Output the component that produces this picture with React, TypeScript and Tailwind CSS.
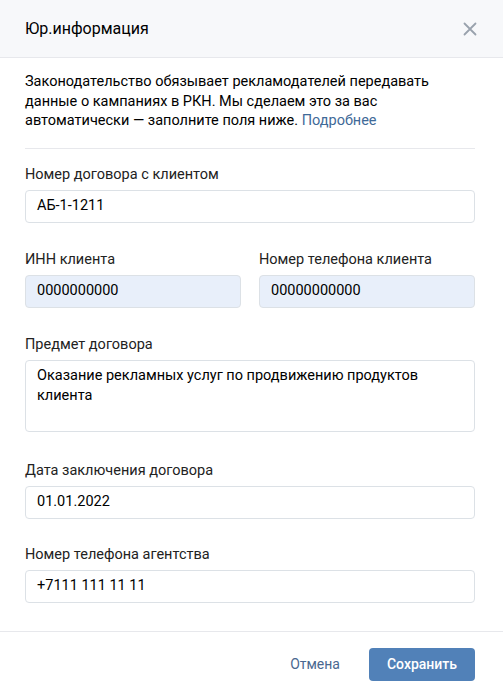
import React from "react";

const font = { fontFamily: "Roboto, 'Noto Sans', Arial, sans-serif" };

function Label({ children }: { children: React.ReactNode }) {
  return <div className="text-[14.5px] leading-[20px] text-[#222] mb-[5px]">{children}</div>;
}

function Field({ value, filled }: { value: string; filled?: boolean }) {
  return (
    <div
      className={`h-[33px] rounded-[4px] border border-[#dce1e6] px-[11px] flex items-center text-[14.5px] text-[#000] ${
        filled ? "bg-[#e8effa]" : "bg-white"
      }`}
    >
      {value}
    </div>
  );
}

export default function App() {
  return (
    <div className="w-[503px] h-[692px] overflow-hidden bg-white" style={font}>
      <div className="h-[58px] bg-[#f7f8fa] border-b border-[#e7e8ec] flex items-center justify-between pl-[25px] pr-[28px]">
        <div className="text-[16px] text-[#000] leading-[20px]">Юр.информация</div>
        <svg width="14" height="14" viewBox="0 0 14 14" className="mr-[-2px]">
          <path d="M1.5 1.5 L12.5 12.5 M12.5 1.5 L1.5 12.5" stroke="#99a2ad" strokeWidth="1.8" strokeLinecap="round" />
        </svg>
      </div>
      <div className="pl-[25px] pr-[28px]">
        <p className="pt-[14px] text-[14.5px] leading-[19.5px] text-[#000]">
          Законодательство обязывает рекламодателей передавать данные о кампаниях в РКН. Мы сделаем это за вас
          автоматически — заполните поля ниже. <span className="text-[#3f6a98]">Подробнее</span>
        </p>
        <div className="mt-[17px] h-px bg-[#e7e8ec]" />
        <div className="pt-[16px]">
          <Label>Номер договора с клиентом</Label>
          <Field value="АБ-1-1211" />
        </div>
        <div className="mt-[27px] grid grid-cols-2 gap-[18px]">
          <div>
            <Label>ИНН клиента</Label>
            <Field value="0000000000" filled />
          </div>
          <div>
            <Label>Номер телефона клиента</Label>
            <Field value="00000000000" filled />
          </div>
        </div>
        <div className="mt-[27px]">
          <Label>Предмет договора</Label>
          <div className="h-[72px] rounded-[4px] border border-[#dce1e6] px-[11px] pt-[5px] text-[14.5px] leading-[20px] text-[#000]">
            Оказание рекламных услуг по продвижению продуктов клиента
          </div>
        </div>
        <div className="mt-[29px]">
          <Label>Дата заключения договора</Label>
          <Field value="01.01.2022" />
        </div>
        <div className="mt-[26px]">
          <Label>Номер телефона агентства</Label>
          <Field value="+7111 111 11 11" />
        </div>
      </div>
      <div className="mt-[28px] border-t border-[#e7e8ec] pt-[16px] px-[28px] flex justify-end items-center gap-[29px]">
        <button className="text-[14px] text-[#4a6890]">Отмена</button>
        <button className="h-[33px] w-[106px] rounded-[4px] bg-[#5181b8] text-white text-[14px] font-medium">
          Сохранить
        </button>
      </div>
    </div>
  );
}
